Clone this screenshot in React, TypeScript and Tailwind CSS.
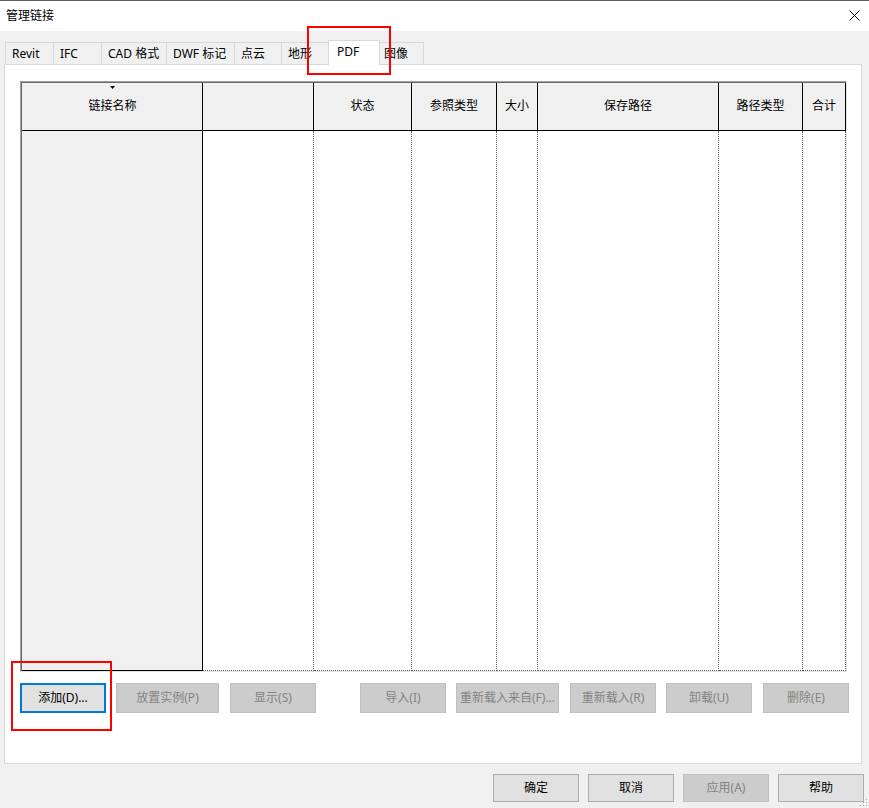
import React from 'react';

const tabs = [
  { label: 'Revit', w: 'w-[48px]' },
  { label: 'IFC', w: 'w-[48px]' },
  { label: 'CAD 格式', w: 'w-[65px]' },
  { label: 'DWF 标记', w: 'w-[68px]' },
  { label: '点云', w: 'w-[47px]' },
  { label: '地形', w: 'w-[47px]' },
];

const columns = [
  { label: '链接名称', w: 'w-[181px]' },
  { label: '', w: 'w-[111px]' },
  { label: '状态', w: 'w-[98px]' },
  { label: '参照类型', w: 'w-[85px]' },
  { label: '大小', w: 'w-[41px]' },
  { label: '保存路径', w: 'w-[181px]' },
  { label: '路径类型', w: 'w-[84px]' },
  { label: '合计', w: 'w-[43px]' },
];

const Btn: React.FC<{ label: string; w?: string; disabled?: boolean; focus?: boolean; className?: string; h?: string }> = ({
  label,
  w = 'w-[86px]',
  disabled,
  focus,
  className = '',
  h = 'h-[30px]',
}) => {
  const base = `${w} ${h} flex shrink-0 items-center justify-center text-[12px] ${className}`;
  if (disabled) return <div className={`${base} border border-[#bfbfbf] bg-[#cccccc] text-[#838383]`}>{label}</div>;
  if (focus) return <div className={`${base} border-2 border-[#0078d7] bg-[#e1e1e1] text-black`}>{label}</div>;
  return <div className={`${base} border border-[#adadad] bg-[#e1e1e1] text-black`}>{label}</div>;
};

const App: React.FC = () => {
  return (
    <div className="relative h-[808px] w-[869px] overflow-hidden bg-[#f0f0f0] font-['Noto_Sans','Noto_Sans_CJK_SC',sans-serif] text-[12px] text-black">
      {/* title bar */}
      <div className="flex h-[31px] items-center justify-between border-t border-[#5f5f5f] bg-white pl-[6px] pr-[9px]">
        <span className="text-[12px] leading-none">管理链接</span>
        <svg width="11" height="11" viewBox="0 0 11 11" className="mb-[2px]">
          <path d="M0.5 0.5 L10.5 10.5 M10.5 0.5 L0.5 10.5" stroke="#000" strokeWidth="1" />
        </svg>
      </div>

      <div className="pl-[4px]">
        {/* tabs */}
        <div className="mt-[9px] flex h-[24px] items-end pl-[1px]">
          {tabs.map((t) => (
            <div
              key={t.label}
              className={`${t.w} flex h-[22px] shrink-0 items-center border-l border-t border-[#d9d9d9] pl-[6px] leading-none`}
            >
              {t.label}
            </div>
          ))}
          <div className="relative z-10 mb-[-1px] flex h-[25px] w-[52px] shrink-0 items-center border-l border-r border-t border-[#d9d9d9] bg-white pb-[3px] pl-[8px] leading-none">
            PDF
          </div>
          <div className="flex h-[22px] w-[44px] shrink-0 items-center border-r border-t border-[#d9d9d9] pl-[4px] leading-none">
            图像
          </div>
        </div>

        {/* panel */}
        <div className="h-[700px] w-[858px] border border-[#d9d9d9] bg-white pl-[15px] pt-[16px]">
          <div className="w-[827px] border-b border-l border-r border-t border-b-[#e3e3e3] border-l-[#a0a0a0] border-r-[#e3e3e3] border-t-[#a0a0a0]">
            <div className="border-l border-t border-[#696969]">
              {/* header */}
              <div className="flex h-[48px] border-b border-black bg-[#f0f0f0]">
                {columns.map((c, i) => (
                  <div
                    key={i}
                    className={`${c.w} relative flex shrink-0 items-center justify-center border-r border-black pb-[1px] ${
                      i === 0 ? 'pl-[1px]' : ''
                    }`}
                  >
                    {i === 0 && (
                      <svg width="5" height="3" viewBox="0 0 5 3" className="absolute left-[88px] top-[3px]">
                        <path d="M0 0 H5 L2.5 3 Z" fill="#000" />
                      </svg>
                    )}
                    {c.label}
                  </div>
                ))}
              </div>
              {/* body */}
              <div className="flex h-[540px]">
                {columns.map((c, i) =>
                  i === 0 ? (
                    <div key={i} className={`${c.w} shrink-0 border-b border-r border-black bg-[#f0f0f0]`} />
                  ) : (
                    <div
                      key={i}
                      className={`${c.w} shrink-0 border-b border-r border-dotted border-[#5a5a5a]`}
                    />
                  )
                )}
              </div>
            </div>
          </div>

          {/* action buttons */}
          <div className="mt-[11px] flex">
            <Btn label="添加(D)..." focus className="ml-[0px]" />
            <Btn label="放置实例(P)" w="w-[103px]" disabled className="ml-[10px]" />
            <Btn label="显示(S)" disabled className="ml-[11px]" />
            <Btn label="导入(I)" disabled className="ml-[44px]" />
            <Btn label="重新载入来自(F)..." w="w-[103px]" disabled className="ml-[10px]" />
            <Btn label="重新载入(R)" disabled className="ml-[11px]" />
            <Btn label="卸载(U)" disabled className="ml-[10px]" />
            <Btn label="删除(E)" disabled className="ml-[11px]" />
          </div>
        </div>
      </div>

      {/* dialog buttons */}
      <div className="mt-[10px] flex justify-end gap-[9px] pr-[5px]">
        <Btn label="确定" h="h-[28px]" />
        <Btn label="取消" h="h-[28px]" />
        <Btn label="应用(A)" h="h-[28px]" disabled />
        <Btn label="帮助" h="h-[28px]" />
      </div>

      {/* resize grip */}
      <svg width="8" height="8" viewBox="0 0 8 8" className="absolute bottom-[1px] right-[1px]">
        <rect x="6" y="0" width="1" height="1" fill="#a0a0a0" />
        <rect x="3" y="3" width="1" height="1" fill="#a0a0a0" />
        <rect x="6" y="3" width="1" height="1" fill="#a0a0a0" />
        <rect x="0" y="6" width="1" height="1" fill="#a0a0a0" />
        <rect x="3" y="6" width="1" height="1" fill="#a0a0a0" />
        <rect x="6" y="6" width="1" height="1" fill="#a0a0a0" />
      </svg>

      {/* red annotation boxes */}
      <div className="pointer-events-none absolute left-[307px] top-[26px] h-[49px] w-[84px] border-2 border-[#ff0000]" />
      <div className="pointer-events-none absolute left-[11px] top-[661px] h-[70px] w-[101px] border-2 border-[#ff0000]" />
    </div>
  );
};

export default App;
